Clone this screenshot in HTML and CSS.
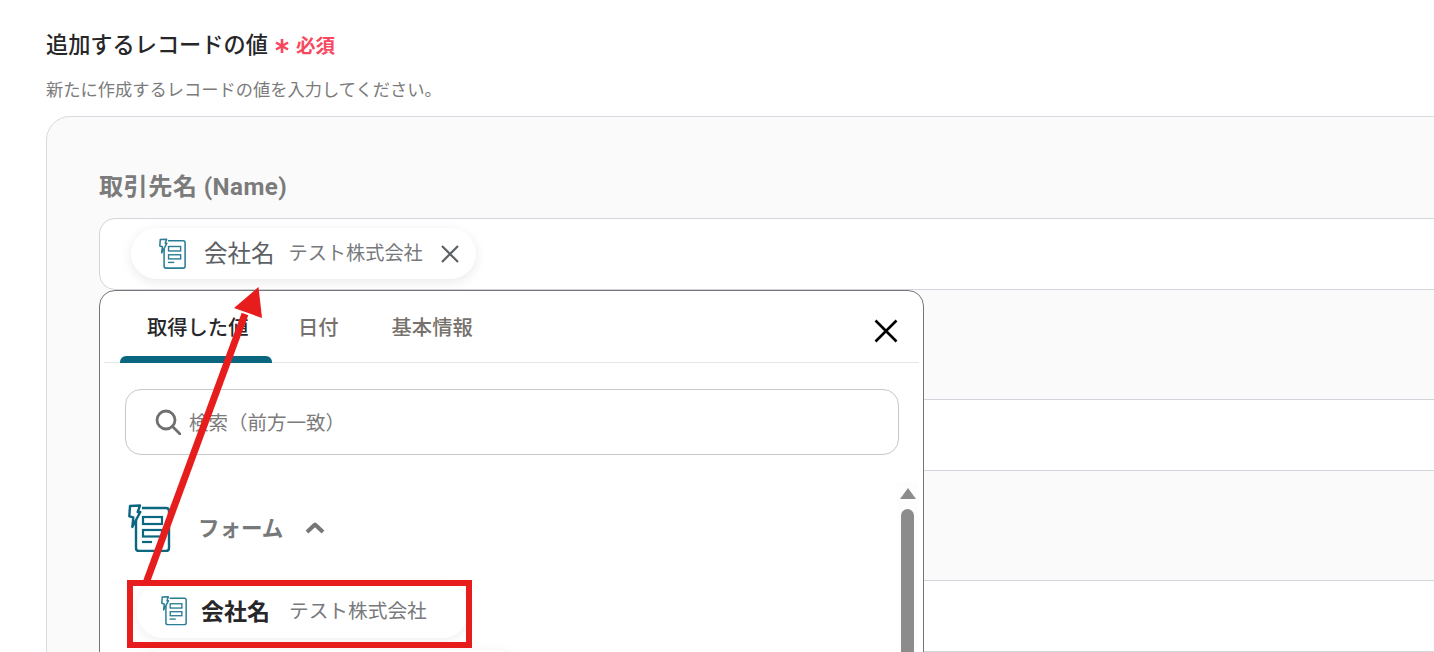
FILE: index.html
```html
<!DOCTYPE html>
<html lang="ja">
<head>
<meta charset="utf-8">
<title>追加するレコードの値</title>
<link rel="stylesheet" href="styles.css">
</head>
<body>
<svg class="defs" width="0" height="0" aria-hidden="true">
  <symbol id="form-icon" viewBox="0 0 44 48">
    <path d="M14 4H38Q41 4 41 7V44Q41 47 38 47H11Q8 47 8 44V16" fill="none" stroke="currentColor" stroke-width="2.400"/>
    <path d="M2 2L12 1.500L9.700 8L12.300 8L4.300 23L5.300 13.300L1.300 12.300Z" fill="none" stroke="currentColor" stroke-width="2.400" stroke-linejoin="round"/>
    <rect x="15" y="13" width="19" height="7" fill="none" stroke="currentColor" stroke-width="2.200"/>
    <rect x="15" y="26" width="19" height="6.500" fill="none" stroke="currentColor" stroke-width="2.200"/>
    <path d="M14 38H24" fill="none" stroke="currentColor" stroke-width="2.200"/>
  </symbol>
</svg>
<main class="page">
  <h2 class="title">追加するレコードの値<span class="required"><svg class="star" viewBox="0 0 14 14"><path d="M7 0V14M1 3.500L13 10.500M13 3.500L1 10.500" stroke="currentColor" stroke-width="2.600" fill="none"/></svg>必須</span></h2>
  <p class="desc">新たに作成するレコードの値を入力してください。</p>
  <section class="panel">
    <div class="label">取引先名 (Name)</div>
    <div class="fields">
      <div class="input">
        <div class="chip">
          <svg class="chip-icon"><use href="#form-icon"/></svg>
          <span class="chip-name">会社名</span>
          <span class="chip-value">テスト株式会社</span>
          <svg class="chip-x" viewBox="0 0 18 18"><path d="M1 1L17 17M17 1L1 17" stroke="currentColor" stroke-width="2.200" fill="none"/></svg>
        </div>
      </div>
      <div class="input"></div>
      <div class="input"></div>
    </div>
  </section>
</main>

<div class="popup">
  <div class="tabs">
    <div class="tab active">取得した値</div>
    <div class="tab">日付</div>
    <div class="tab">基本情報</div>
    <svg class="close" viewBox="0 0 24 24"><path d="M1.500 1.500L22.500 22.500M22.500 1.500L1.500 22.500" stroke="#000" stroke-width="2.600" fill="none"/></svg>
  </div>
  <div class="search">
    <svg class="search-icon" viewBox="0 0 26 26"><circle cx="11" cy="11" r="9" fill="none" stroke="#6f6f6f" stroke-width="2.800"/><path d="M17.500 17.500L25 25" stroke="#6f6f6f" stroke-width="2.800" stroke-linecap="round"/></svg>
    <span>検索（前方一致）</span>
  </div>
  <div class="scroll">
    <div class="group">
      <svg class="group-icon"><use href="#form-icon"/></svg>
      <span class="group-name">フォーム</span>
      <svg class="chevron" viewBox="0 0 20 12"><path d="M2 10L10 2.500L18 10" fill="none" stroke="#777" stroke-width="4" stroke-linejoin="round"/></svg>
    </div>
    <div class="item">
      <svg class="item-icon"><use href="#form-icon"/></svg>
      <span class="item-name">会社名</span>
      <span class="item-value">テスト株式会社</span>
    </div>
    <div class="item next"></div>
    <div class="scrollbar">
      <div class="scroll-up"></div>
      <div class="scroll-thumb"></div>
    </div>
  </div>
</div>

<div class="highlight"></div>
<svg class="arrow" viewBox="0 0 1434 652"><path d="M146 583L245 314" stroke="#e71c1c" stroke-width="7" fill="none"/><path d="M258.500 287L234 308L262 318Z" fill="#e71c1c"/></svg>
</body>
</html>
```

FILE: styles.css
```css
* { box-sizing: border-box; }
html, body { margin: 0; height: 652px; overflow: hidden; background: #fff; }
body {
  position: relative;
  font-family: "Noto Sans CJK JP", "Noto Sans", sans-serif;
  color: #27272a;
}
.defs { position: absolute; }
.page { padding: 25px 0 0 46px; width: 1700px; }
.title {
  margin: 0;
  height: 36px;
  font-size: 22.200px;
  line-height: 36px;
  font-weight: 500;
  color: #27272a;
  display: flex;
  align-items: center;
}
.required {
  color: #f8485e;
  font-size: 19.500px;
  font-weight: 700;
  margin-left: 7px;
  padding-top: 4px;
  display: flex;
  align-items: center;
}
.star { width: 14px; height: 14px; margin: 2px 7px 0 0; flex: none; }
.desc {
  margin: 14px 0 0;
  font-size: 17.260px;
  line-height: 28px;
  color: #7b7b7b;
}
.panel {
  margin-top: 13px;
  background: #fafafa;
  border: 1px solid #d9dbe2;
  border-radius: 24px;
  height: 700px;
  padding: 55px 0 0 52px;
}
.label {
  font-family: "Roboto", "Noto Sans CJK JP", sans-serif;
  font-size: 24.200px;
  line-height: 30px;
  font-weight: 700;
  letter-spacing: .4px;
  color: #7b7b7b;
}
.fields {
  margin-top: 16px;
  display: flex;
  flex-direction: column;
  gap: 109px;
}
.input {
  height: 72px;
  background: #fff;
  border: 1px solid #d3d5dc;
  border-radius: 16px;
  padding: 9px 0 0 31px;
}
.chip {
  width: 345px;
  height: 51px;
  border-radius: 26px;
  background: #fff;
  box-shadow: 0 3px 12px rgba(0, 0, 0, .09);
  display: flex;
  align-items: center;
  padding-left: 28px;
}
.chip-icon { width: 28px; height: 31px; color: #2a7d94; flex: none; }
.chip-name { font-size: 23.500px; line-height: 26px; margin-bottom: 4px; color: #5d6165; margin-left: 17px; }
.chip-value { font-size: 19.200px; line-height: 26px; margin-bottom: 4px; color: #77797c; margin-left: 14px; }
.chip-x { width: 18px; height: 18px; color: #5d6165; margin-left: 18px; flex: none; }

.popup {
  position: absolute;
  left: 99px;
  top: 290px;
  width: 825px;
  height: 380px;
  background: #fff;
  border: 1px solid #757575;
  border-radius: 16px;
  padding: 0 4px;
}
.tabs {
  height: 72px;
  border-bottom: 1px solid #e5e5e5;
  display: flex;
  padding-left: 16px;
  position: relative;
}
.tab {
  font-size: 20.300px;
  font-weight: 500;
  line-height: 71px;
  color: #77716b;
  padding: 0 27px 0 26px;
}
.tab.active {
  width: 152px;
  padding-left: 27px;
  color: #27272a;
  position: relative;
  white-space: nowrap;
}
.tab.active::after {
  content: "";
  position: absolute;
  left: 0;
  right: 0;
  bottom: -1px;
  height: 7px;
  background: #0b6780;
  border-radius: 6px 6px 0 0;
}
.close { position: absolute; right: 21px; top: 28px; width: 24px; height: 24px; }
.search {
  margin: 26px 20px 0 21px;
  height: 66px;
  border: 1px solid #c9c9c9;
  border-radius: 16px;
  display: flex;
  align-items: center;
  padding-left: 29px;
  font-size: 19.500px;
  line-height: 30px;
  color: #7b7b7b;
}
.search-icon { width: 26px; height: 26px; margin-right: 8px; flex: none; }
.scroll { position: relative; padding: 49px 0 0 24px; }
.group { display: flex; align-items: center; height: 48px; }
.group-icon { width: 44px; height: 48px; color: #0b6780; flex: none; }
.group-name { font-size: 21.500px; font-weight: 700; color: #77787a; margin-left: 26px; line-height: 30px; position: relative; top: -1px; }
.chevron { width: 20px; height: 12px; margin-left: 22px; }
.item {
  margin: 30px 0 0 9px;
  width: 331px;
  height: 56px;
  border-radius: 26px;
  background: #fff;
  box-shadow: 0 2px 12px rgba(0, 0, 0, .07);
  display: flex;
  align-items: center;
  padding-left: 24px;
}
.item.next { margin-top: 12px; width: 385px; }
.item-icon { width: 27px; height: 31px; color: #2a7d94; flex: none; }
.item-name { font-size: 23px; line-height: 30px; font-weight: 700; color: #27272a; margin-left: 13px; }
.item-value { font-size: 19.700px; line-height: 30px; color: #77797c; margin-left: 19px; }
.scrollbar {
  position: absolute;
  right: 1px;
  top: 27px;
  width: 21px;
  background: #fdfdfd;
  display: flex;
  flex-direction: column;
  align-items: center;
  height: 200px;
}
.scroll-up {
  margin-top: 6px;
  width: 0;
  height: 0;
  border-left: 8px solid transparent;
  border-right: 8px solid transparent;
  border-bottom: 11px solid #8c8c8c;
}
.scroll-thumb {
  margin-top: 10px;
  width: 13px;
  height: 200px;
  border-radius: 7px;
  background: #8c8c8c;
}
.highlight {
  position: absolute;
  left: 127px;
  top: 580px;
  width: 345px;
  height: 68px;
  border: 6px solid #e71c1c;
}
.arrow { position: absolute; left: 0; top: 0; width: 1434px; height: 652px; pointer-events: none; }
```
